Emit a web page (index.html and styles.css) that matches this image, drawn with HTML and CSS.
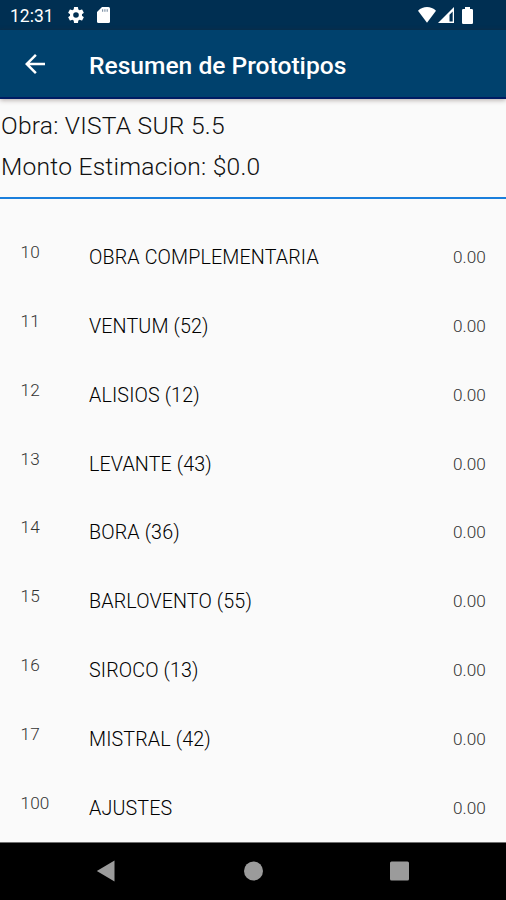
FILE: index.html
```html
<!DOCTYPE html>
<html lang="es">
<head>
<meta charset="utf-8">
<title>Resumen de Prototipos</title>
<link rel="stylesheet" href="styles.css">
</head>
<body>
<div class="screen">
  <div class="status">
    <span class="clock">12:31</span>
    <svg class="gear" viewBox="2 2 20 20"><path d="M19.43 12.98c.04-.32.07-.64.07-.98s-.03-.66-.07-.98l2.11-1.65c.19-.15.24-.42.12-.64l-2-3.46c-.12-.22-.39-.3-.61-.22l-2.49 1c-.52-.4-1.08-.73-1.69-.98l-.38-2.65A.49.49 0 0 0 14 2h-4c-.25 0-.46.18-.49.42l-.38 2.65c-.61.25-1.17.59-1.69.98l-2.49-1c-.23-.09-.49 0-.61.22l-2 3.46c-.13.22-.07.49.12.64l2.11 1.65c-.04.32-.07.65-.07.98s.03.66.07.98l-2.11 1.65c-.19.15-.24.42-.12.64l2 3.46c.12.22.39.3.61.22l2.49-1c.52.4 1.08.73 1.69.98l.38 2.65c.03.24.24.42.49.42h4c.25 0 .46-.18.49-.42l.38-2.65c.61-.25 1.17-.59 1.69-.98l2.49 1c.23.09.49 0 .61-.22l2-3.46c.12-.22.07-.49-.12-.64zM12 15.5A3.5 3.5 0 1 1 12 8.500a3.5 3.500 0 0 1 0 7z"/></svg>
    <svg class="card" viewBox="0 0 13 16"><path d="M5 0h6.500A1.500 1.500 0 0 1 13 1.500v13a1.500 1.500 0 0 1-1.500 1.500h-10A1.500 1.500 0 0 1 0 14.500V5z"/><path class="notch" d="M5 2.300h1.200v2.400H5zM7.300 2.300h1.200v2.400H7.300zM9.600 2.300h1.200v2.400H9.600z"/></svg>
    <svg class="wifi" viewBox="0 0 18 16"><path d="M0 3.700C5-1.200 13-1.200 18 3.700L9 15.700z"/></svg>
    <svg class="signal" viewBox="0 0 16 16"><path fill-rule="evenodd" d="M16 0v16H0zM14.700 4.500 11.500 7.700v6.800h3.200z"/></svg>
    <svg class="battery" viewBox="0 0 11 17"><path d="M3 0h5v2h1.800A1.200 1.200 0 0 1 11 3.200v12.600A1.200 1.200 0 0 1 9.800 17H1.200A1.200 1.200 0 0 1 0 15.800V3.200A1.200 1.200 0 0 1 1.200 2H3z"/></svg>
  </div>
  <header class="appbar">
    <svg class="back" viewBox="4 4 16 16"><path d="M20 11H7.830l5.590-5.590L12 4l-8 8 8 8 1.410-1.410L7.830 13H20z"/></svg>
    <h1>Resumen de Prototipos</h1>
  </header>
  <section class="summary">
    <p class="obra">Obra: VISTA SUR 5.5</p>
    <p class="monto">Monto Estimacion: $0.0</p>
  </section>
  <main class="list">
    <div class="row"><span class="code">10</span><span class="name">OBRA COMPLEMENTARIA</span><span class="amount">0.00</span></div>
    <div class="row"><span class="code">11</span><span class="name">VENTUM (52)</span><span class="amount">0.00</span></div>
    <div class="row"><span class="code">12</span><span class="name">ALISIOS (12)</span><span class="amount">0.00</span></div>
    <div class="row"><span class="code">13</span><span class="name">LEVANTE (43)</span><span class="amount">0.00</span></div>
    <div class="row"><span class="code">14</span><span class="name">BORA (36)</span><span class="amount">0.00</span></div>
    <div class="row"><span class="code">15</span><span class="name">BARLOVENTO (55)</span><span class="amount">0.00</span></div>
    <div class="row"><span class="code">16</span><span class="name">SIROCO (13)</span><span class="amount">0.00</span></div>
    <div class="row"><span class="code">17</span><span class="name">MISTRAL (42)</span><span class="amount">0.00</span></div>
    <div class="row"><span class="code">100</span><span class="name">AJUSTES</span><span class="amount">0.00</span></div>
  </main>
  <nav class="navbar">
    <svg viewBox="0 0 20 22"><path d="M18.500 .5v21L.8 11z"/></svg>
    <svg viewBox="0 0 20 22"><circle cx="10.500" cy="11" r="9.500"/></svg>
    <svg viewBox="0 0 20 22"><rect x="0" y="1.500" width="19" height="19" rx="1.500"/></svg>
  </nav>
</div>
</body>
</html>
```

FILE: styles.css
```css
* { box-sizing: border-box; }
body { margin: 0; font-family: Roboto, "Liberation Sans", sans-serif; }
h1, p { margin: 0; }
svg { display: block; flex: none; }

.screen {
  width: 506px;
  height: 900px;
  display: flex;
  flex-direction: column;
  background: #fafafa;
  overflow: hidden;
}

.status {
  height: 30px;
  flex: none;
  display: flex;
  align-items: center;
  padding: 0 33px 0 10px;
  background: #002f52;
  color: #fff;
  fill: #fff;
}
.clock { width: 58px; padding-top: 1px; font-size: 17.5px; line-height: 20px; }
.gear { width: 16px; height: 16px; }
.card { width: 13px; height: 16px; margin-left: 13px; }
.notch { fill: #8194a8; }
.wifi { width: 18px; height: 16px; margin-left: auto; }
.signal { width: 16px; height: 16px; margin-left: 2px; }
.battery { width: 11px; height: 17px; margin-left: 8px; }

.appbar {
  height: 69px;
  flex: none;
  display: flex;
  align-items: center;
  padding: 1px 0 0 25px;
  background: #00416d;
  border-bottom: 2px solid #001c63;
  box-shadow: 0 1px 5px rgba(60, 35, 30, .4);
  color: #fff;
  fill: #fff;
}
.back { width: 20px; height: 20px; }
.appbar h1 { margin-left: 44px; padding-top: 3px; font-size: 24.6px; font-weight: 500; line-height: 30px; white-space: nowrap; }

.summary {
  height: 100px;
  flex: none;
  padding: 6px 0 0 1px;
  border-bottom: 2px solid #1a7fdc;
  color: #101010;
  font-size: 24.6px;
  font-weight: 300;
  letter-spacing: .23px;
  line-height: 41px;
}

.list { flex: 1; padding-top: 23px; }
.row {
  height: 68.88px;
  display: flex;
  align-items: center;
  padding: 0 20px 0 20.5px;
}
.code { width: 68.5px; padding-bottom: 9px; font-size: 17.2px; font-weight: 300; letter-spacing: .1px; color: #333; }
.name { flex: 1; padding-top: 2px; font-size: 19.7px; font-weight: 300; letter-spacing: .13px; color: #000; }
.amount { padding-top: 1px; font-size: 17.2px; font-weight: 300; letter-spacing: .1px; color: #333; }

.navbar {
  height: 59px;
  flex: none;
  display: grid;
  grid-template-columns: 20px 20px 20px;
  column-gap: 127px;
  align-items: center;
  padding: 0 0 2px 96px;
  background: #000;
  border-top: 1px solid #707070;
  fill: #9b9b9b;
}
.navbar svg { width: 20px; height: 22px; }
```
